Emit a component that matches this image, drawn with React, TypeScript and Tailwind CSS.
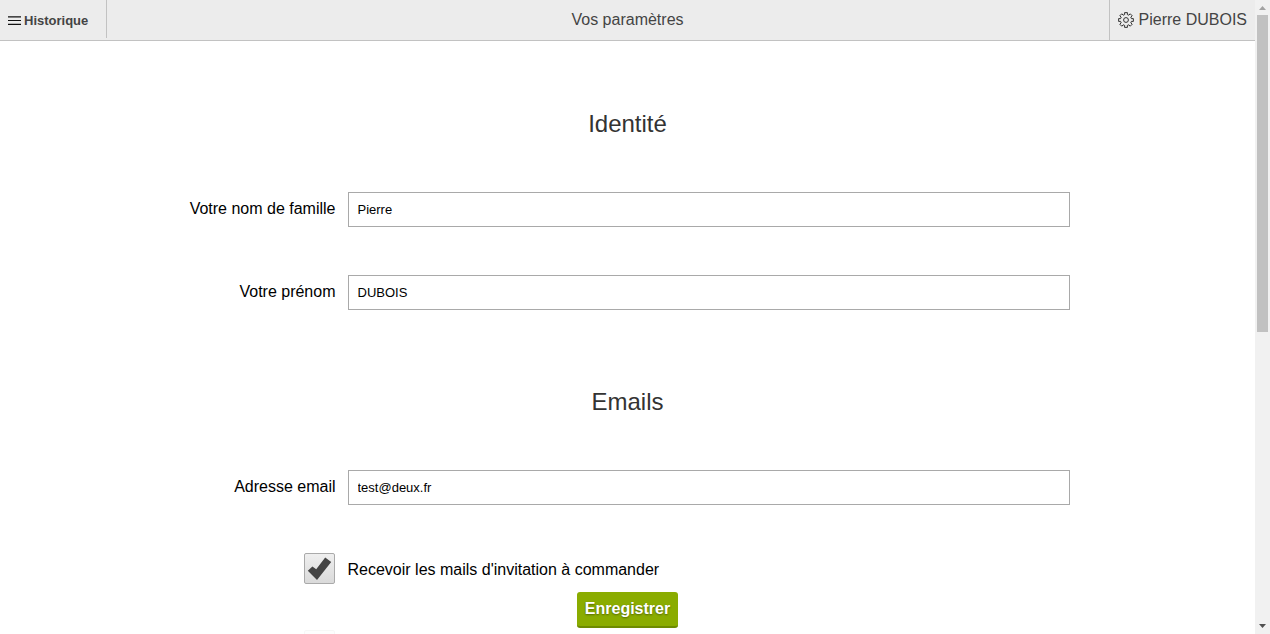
import { useState } from "react";

type FieldProps = { id: string; label: string; value: string; type?: string };

function Field({ id, label, value, type = "text" }: FieldProps) {
  return (
    <div className="mb-12 flex items-center gap-3 pr-px">
      <label htmlFor={id} className="-mt-0.5 w-[151px] shrink-0 text-right leading-6">
        {label}
      </label>
      <input
        id={id}
        type={type}
        defaultValue={value}
        className="h-[35px] min-w-0 flex-1 border border-[#a9a9a9] bg-white px-[9px] text-[13px] text-black outline-none"
      />
    </div>
  );
}

function Check({ id, label }: { id: string; label?: string }) {
  const [on, setOn] = useState(true);
  return (
    <div className="mb-[46px] flex items-center gap-[13px]">
      <div className="flex w-[150px] shrink-0 justify-end">
        <span className="grid size-[31px] rounded-xs border border-[#aaaaaa] bg-linear-to-b from-[#efefef] to-[#dadada]">
          <input
            id={id}
            type="checkbox"
            aria-label={label ? undefined : "Emails"}
            checked={on}
            onChange={(e) => setOn(e.target.checked)}
            className="col-start-1 row-start-1 appearance-none"
          />
          {on && (
            <svg viewBox="0 0 29 29" className="pointer-events-none col-start-1 row-start-1 size-[29px]" aria-hidden="true">
              <path d="M2.8 16.8 7.4 12.4l3.8 2.8L20.2 3.4l6 4.6L12 26z" fill="#444" />
            </svg>
          )}
        </span>
      </div>
      {label && (
        <label htmlFor={id} className="pt-0.5 leading-6">
          {label}
        </label>
      )}
    </div>
  );
}

function Gear() {
  const points: string[] = [];
  for (let i = 0; i < 8; i++) {
    const at = (r: number, deg: number) => {
      const a = ((i * 45 + deg - 90) * Math.PI) / 180;
      return `${(8 + r * Math.cos(a)).toFixed(2)} ${(8 + r * Math.sin(a)).toFixed(2)}`;
    };
    points.push(at(5.6, -14), at(7.5, -11), at(7.5, 11), at(5.6, 14));
  }
  return (
    <svg viewBox="0 0 16 16" className="size-4" fill="none" stroke="#333" strokeWidth="1" aria-hidden="true">
      <path d={`M${points.join("L")}Z`} />
      <circle cx="8" cy="8" r="2.4" />
    </svg>
  );
}

function Title({ children }: { children: string }) {
  return <h2 className="text-center text-2xl leading-8 text-[#333]">{children}</h2>;
}

export default function App() {
  return (
    <div className="flex h-screen overflow-hidden bg-white font-['Liberation_Sans',Arial,sans-serif] text-base text-black">
      <div className="flex min-w-0 flex-1 flex-col">
        <header className="grid shrink-0 grid-cols-[1fr_auto_1fr] border-b border-[#c2c2c2] bg-[#ececec] text-[#444]">
          <div className="flex items-start">
            <button type="button" className="flex h-[38px] w-[107px] items-center gap-[3px] border-r border-[#c2c2c2] pt-1 pl-2 text-[13px] font-bold">
              <svg viewBox="0 0 13 10" className="h-2.5 w-[13px]" aria-hidden="true">
                <path d="M0 .3h13v1.3H0zM0 4h13v1.1H0zM0 7.7h13V9H0z" fill="#111" />
              </svg>
              Historique
            </button>
          </div>
          <h1 className="leading-10">Vos paramètres</h1>
          <a href="#compte" className="flex h-10 items-center gap-[5px] justify-self-end border-l border-[#c2c2c2] px-2">
            <Gear />
            <span className="leading-10">Pierre DUBOIS</span>
          </a>
        </header>
        <main className="grid min-h-0 flex-1 grid-rows-[minmax(0,1fr)]">
          <form className="col-start-1 row-start-1 mx-auto w-full max-w-[886px] overflow-hidden pt-[67px]">
            <Title>Identité</Title>
            <div className="pt-[52px]">
              <Field id="nom" label="Votre nom de famille" value="Pierre" />
              <Field id="prenom" label="Votre prénom" value="DUBOIS" />
            </div>
            <div className="pt-7">
              <Title>Emails</Title>
            </div>
            <div className="pt-[52px]">
              <Field id="email" label="Adresse email" value="test@deux.fr" type="email" />
              <Check id="invitation" label="Recevoir les mails d'invitation à commander" />
              <Check id="autres" />
            </div>
          </form>
          <div className="z-10 col-start-1 row-start-1 flex justify-center self-end bg-white/90 pt-1 pb-1.5">
            <button type="button" className="h-9 rounded-[3px] border-b-2 border-[#6d8b00] bg-[#8aac00] px-2 font-bold text-white [text-shadow:0_1px_2px_#00000066]">
              Enregistrer
            </button>
          </div>
        </main>
      </div>
      <div className="flex w-[15px] shrink-0 flex-col items-center bg-[#f1f1f1]" aria-hidden="true">
        <svg viewBox="0 0 15 15" className="size-[15px] shrink-0">
          <path d="M4 10h7L7.5 6z" fill="#a3a3a3" />
        </svg>
        <div className="min-h-0 w-full flex-1 px-0.5">
          <div className="h-[52.5%] bg-[#c1c1c1]" />
        </div>
        <svg viewBox="0 0 15 15" className="size-[15px] shrink-0">
          <path d="M4 5h7L7.5 9z" fill="#505050" />
        </svg>
      </div>
    </div>
  );
}
